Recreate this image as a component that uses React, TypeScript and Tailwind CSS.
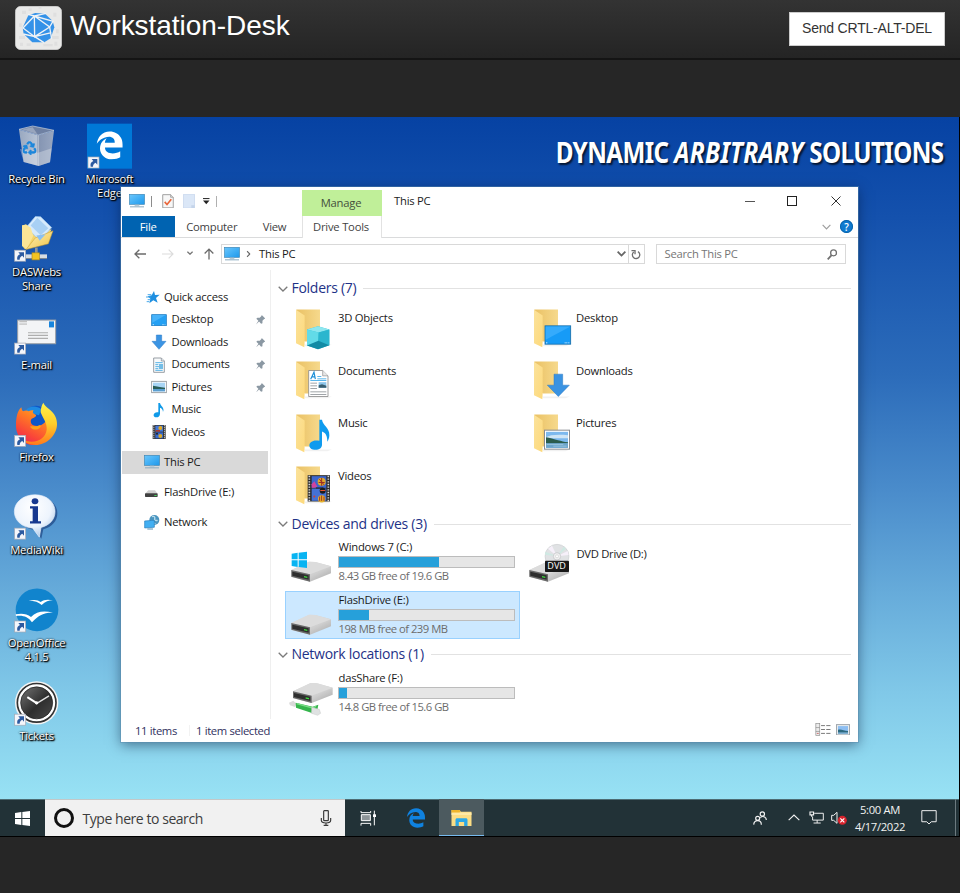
import type { ReactNode } from "react";
import { FaRecycle } from "react-icons/fa";
import { FaEdgeLegacy } from "react-icons/fa6";

/* ---------- Small shared glyphs ---------- */

function MonitorIcon({ className }: { className: string }) {
  return (
    <svg viewBox="0 0 48 42" className={className}>
      <defs>
        <linearGradient id="mon" x1="0" y1="0" x2="1" y2="1">
          <stop offset="0" stopColor="#6cc6fb" />
          <stop offset="0.5" stopColor="#43b0f5" />
          <stop offset="1" stopColor="#1f98ea" />
        </linearGradient>
      </defs>
      <rect x="1.500" y="1" width="45" height="30" fill="url(#mon)" stroke="#3f86b4" strokeWidth="2" />
      <path d="M18 32h12l2 5H16z" fill="#b9cbd6" />
      <path d="M3 38.500h42" stroke="#8aaabf" strokeWidth="3" />
    </svg>
  );
}

function Chevron({ className, width = 1.3 }: { className: string; width?: number }) {
  return (
    <svg viewBox="0 0 10 6" fill="none" stroke="currentColor" strokeWidth={width} className={className}>
      <path d="M0.700 0.700 5 5 9.300 0.700" />
    </svg>
  );
}

function PinIcon() {
  return (
    <svg viewBox="0 0 28 28" className="h-[9.5px] w-[9.5px]">
      <path d="M17 0l11 11-4 1-5 5 0 7-4 2-6-7-9 9 7-11-6-6 3-3 7 0 5-5z" fill="#8b98a3" />
    </svg>
  );
}

function ShortcutArrow({ x, y }: { x: number; y: number }) {
  return (
    <g transform={`translate(${x} ${y})`}>
      <rect x="1" y="1" width="33" height="33" fill="#f4f6fb" stroke="#a5a9b5" strokeWidth="2" />
      <path d="M9 30c-2-9 1-14 8-17l-5-6h17v17l-5-6c-6 3-8 6-8 12z" fill="#2c5aa0" />
    </g>
  );
}

/* ---------- Desktop icons ---------- */

const desktopSvg = "h-[52px] w-[73px] shrink-0";

function RecycleBinIcon() {
  return (
    <svg viewBox="0 15 219 156" className={desktopSvg}>
      <defs>
        <linearGradient id="bin" x1="0" x2="1">
          <stop offset="0" stopColor="#a3afc2" />
          <stop offset="0.5" stopColor="#c3cbd7" />
          <stop offset="0.55" stopColor="#8d9ab3" />
          <stop offset="1" stopColor="#a4afc3" />
        </linearGradient>
      </defs>
      <path d="M57 44 114 61 162 47 150 142 116 153 71 141z" fill="url(#bin)" opacity="0.930" />
      <path d="M57 43 98 33 162 46 115 60z" fill="#6f81a3" stroke="#c9d1de" strokeWidth="2" />
      <path d="M66 43 98 37 112 57z" fill="#98a5bd" />
      <path d="M115 61v91" stroke="#cfd6e1" strokeWidth="2" />
      <path d="M60 102 114 113 155 100 150 142 116 153 71 141z" fill="#dfe3ea" opacity="0.400" />
      <FaRecycle x={68} y={79} size={41} color="#1c87dc" strokeWidth={26} />
    </svg>
  );
}

function EdgeDesktopIcon() {
  return (
    <svg viewBox="219 15 219 156" className={desktopSvg}>
      <rect x="261" y="26" width="135" height="135" fill="#0078d7" />
      <FaEdgeLegacy x={286} y={48} size={86} color="#fff" />
      <ShortcutArrow x={263} y={125} />
    </svg>
  );
}

function SharedFolderIcon() {
  return (
    <svg viewBox="0 293.400 219 156" className={desktopSvg}>
      <defs>
        <linearGradient id="shf" x1="0" y1="0" x2="1" y2="1">
          <stop offset="0" stopColor="#fff3ba" />
          <stop offset="1" stopColor="#f0c245" />
        </linearGradient>
      </defs>
      <path d="M66 331 78 328 92 337 99 350 155 343 130 386 75 402 66 392z" fill="#f5d56b" />
      <path d="M79 336 106 304 122 305 155 337 120 377z" fill="#d6eafc" stroke="#9cc6ec" strokeWidth="2" />
      <path d="M92 331 112 308 145 339 122 360z" fill="#a8d0f4" />
      <path d="M66 331 78 328 92 338 100 362 80 402 66 392z" fill="#fbe596" />
      <path d="M106 368 159 347 145 386 78 403z" fill="url(#shf)" stroke="#c99a2b" strokeWidth="1.500" />
      <path d="M109 361 137 357 119 377z" fill="#8cc0f0" />
      <path d="M109 397v20" stroke="#8d949c" strokeWidth="8" />
      <path d="M77 424h64" stroke="#d8dde2" strokeWidth="13" />
      <path d="M77 430h64" stroke="#7d8790" strokeWidth="3" />
      <rect x="96" y="413" width="22" height="21" fill="#f2c322" stroke="#b28b18" strokeWidth="2" />
      <ShortcutArrow x={43} y={404} />
    </svg>
  );
}

function MailIcon() {
  return (
    <svg viewBox="0 571.800 219 156" className={desktopSvg}>
      <rect x="53" y="614" width="114" height="71" fill="#f3f4f6" stroke="#9a9fa6" strokeWidth="3" />
      <rect x="147" y="618" width="15" height="18" fill="#1784dd" />
      <path d="M58 619h23M58 626h23" stroke="#b3b3b3" strokeWidth="3" />
      <path d="M84 652h60M84 660h60M84 669h60" stroke="#aeaeae" strokeWidth="3.500" />
      <ShortcutArrow x={43} y={682} />
    </svg>
  );
}

function FirefoxIcon() {
  return (
    <svg viewBox="0 40 219 156" className={desktopSvg}>
      <defs>
        <linearGradient id="fxo" x1="0.800" y1="0" x2="0.200" y2="1">
          <stop offset="0" stopColor="#ffb22a" />
          <stop offset="0.4" stopColor="#ff7a24" />
          <stop offset="0.75" stopColor="#f9443a" />
          <stop offset="1" stopColor="#e8255f" />
        </linearGradient>
        <linearGradient id="fxt" x1="0.500" y1="0" x2="0.500" y2="1">
          <stop offset="0" stopColor="#fff24a" />
          <stop offset="0.5" stopColor="#ffcd2a" />
          <stop offset="1" stopColor="#ff7a1c" />
        </linearGradient>
      </defs>
      <circle cx="108" cy="96" r="33" fill="#0f57c8" />
      <path d="M78 77C87 63 110 62 124 74l-7 18-30-8z" fill="#1e8ae2" />
      <path d="M64 68c1 6 2 9 5 12 8-4 13-3 17 0 4-3 9-4 15-3-4 5-4 9 7 14 1 4-2 7-13 11-5 5-3 14 3 19 14 7 28 3 40-11l28 0c-4 44-38 71-67 71-32 0-51-31-51-57 0-25 4-45 16-56z" fill="url(#fxo)" />
      <path d="M122 83c0-11 3-21 8-29 3 7 9 12 17 19 17 13 25 29 24 48-2 32-31 60-64 60-20 0-30-6-36-14 38 12 66-5 69-32 2-20-11-33-18-52z" fill="url(#fxt)" />
      <path d="M90 126c8-4 14 2 25-3 8-3 10 1 5 6-8 8-22 8-30-3z" fill="#ffa11a" />
      <ShortcutArrow x={43} y={151} />
    </svg>
  );
}

function MediaWikiIcon() {
  return (
    <svg viewBox="0 318.600 219 156" className={desktopSvg}>
      <defs>
        <radialGradient id="mw" cx="0.450" cy="0.300" r="0.750">
          <stop offset="0" stopColor="#ffffff" />
          <stop offset="0.6" stopColor="#edf4fd" />
          <stop offset="1" stopColor="#a4c2e6" />
        </radialGradient>
      </defs>
      <path d="M112 335c36 0 60 23 60 50 0 24-16 41-42 48l-6 29-20-27c-30-3-50-24-50-50 0-27 24-50 58-50z" fill="#1e4582" opacity="0.700" />
      <path d="M105 330c36 0 60 23 60 50 0 24-16 41-42 48l-5 29-20-27c-34-3-55-24-55-50 0-27 26-50 62-50z" fill="url(#mw)" stroke="#e6effb" strokeWidth="2" />
      <ellipse cx="105" cy="349" rx="10" ry="9" fill="#17388f" />
      <path d="M90 364h24v45h9v7H90v-7h8v-38h-8z" fill="#17388f" />
      <ShortcutArrow x={43} y={429} />
    </svg>
  );
}

function OpenOfficeIcon() {
  return (
    <svg viewBox="0 42 219 156" className={desktopSvg}>
      <circle cx="111" cy="119.500" r="64" fill="#1184cd" />
      <path d="M86 92c16-4 28-3 36 4 9-7 21-8 37-5-13 0-23 4-34 14-9-9-21-13-39-13z" fill="#fff" />
      <path d="M47 133c18-4 33-2 46 8 17-18 40-20 66-13-26-1-43 6-63 29-12-17-27-22-48-19z" fill="#fff" />
      <ShortcutArrow x={43} y={152} />
    </svg>
  );
}

function TicketsIcon() {
  return (
    <svg viewBox="0 320.400 219 156" className={desktopSvg}>
      <defs>
        <linearGradient id="clk" x1="0" y1="0" x2="1" y2="1">
          <stop offset="0.2" stopColor="#5b5b5b" />
          <stop offset="0.55" stopColor="#2e2e2e" />
          <stop offset="1" stopColor="#4a4a4a" />
        </linearGradient>
      </defs>
      <circle cx="110" cy="398" r="65" fill="#f4f4f4" />
      <circle cx="110" cy="398" r="58" fill="#fff" stroke="#333" strokeWidth="5" />
      <circle cx="110" cy="398" r="48" fill="url(#clk)" stroke="#1b1b1b" strokeWidth="2" />
      <path d="M82 381 110 399" stroke="#fff" strokeWidth="6" />
      <path d="M108 401 147 377" stroke="#e3e3e3" strokeWidth="4" />
      <circle cx="110" cy="398" r="5" fill="#fff" />
      <ShortcutArrow x={43} y={431} />
    </svg>
  );
}

function DesktopItem({ icon, lines }: { icon: ReactNode; lines: string[] }) {
  return (
    <div className="flex h-[92.8px] w-[73px] flex-col items-center">
      {icon}
      {lines.map((line) => (
        <span
          key={line}
          className="text-[11.25px] leading-[14px] tracking-[-0.2px] whitespace-nowrap text-white [text-shadow:1px_1px_1px_#000,0_0_2px_#000,1px_1px_2px_#000]"
        >
          {line}
        </span>
      ))}
    </div>
  );
}

/* ---------- Sidebar ---------- */

function SideRow({
  icon,
  label,
  nested,
  pinned,
  selected,
}: {
  icon: ReactNode;
  label: string;
  nested?: boolean;
  pinned?: boolean;
  selected?: boolean;
}) {
  return (
    <div
      className={`flex h-[22.5px] w-[146px] items-center ${nested ? "pl-[28.5px]" : "pl-[21px]"} ${
        selected ? "bg-[#d9d9d9]" : ""
      }`}
    >
      <span className="flex w-[17px] shrink-0 justify-center">{icon}</span>
      <span className="ml-[4px] flex-1 whitespace-nowrap">{label}</span>
      {pinned && (
        <span className="mr-[3px]">
          <PinIcon />
        </span>
      )}
    </div>
  );
}

const smallIcon = "h-[16px] w-[16px]";

const StarSmall = (
  <svg viewBox="0 0 48 48" className={smallIcon}>
    <path d="M30 6l3 12 14-1-11 10 5 14-13-7-12 9 3-14-8-7 12-3z" fill="#1f8fe0" />
    <path d="M11 17h11M6 24h14M11 32h8M8 38h8" stroke="#4aa9ea" strokeWidth="3" />
  </svg>
);
const DesktopSmall = (
  <svg viewBox="0 0 48 48" className={smallIcon}>
    <rect x="2" y="8" width="44" height="33" fill="#25a0f3" stroke="#1173bd" strokeWidth="2" />
    <path d="M4 9h40L4 32z" fill="#48b3fa" />
    <path d="M5 38h4M33 38h2M37 38h2M41 38h2" stroke="#fff" strokeWidth="2" />
  </svg>
);
const DownSmall = (
  <svg viewBox="0 0 48 48" className={smallIcon}>
    <path d="M16 3h16v19h13L24 46 3 22h13z" fill="#3b94e3" stroke="#2a7ac6" strokeWidth="1.500" />
  </svg>
);
const DocSmall = (
  <svg viewBox="0 0 48 48" className={smallIcon}>
    <path d="M8 3h23l9 9v34H8z" fill="#f8fafb" stroke="#858d94" strokeWidth="2.500" />
    <path d="M31 3v9h9" fill="#dde4ea" stroke="#858d94" strokeWidth="2" />
    <path d="M13 17h22M13 23h9M13 29h22M13 35h9M13 40h22" stroke="#57b1e4" strokeWidth="3" />
    <rect x="24" y="21" width="12" height="15" fill="#74bde6" />
  </svg>
);
const PictureSmall = (
  <svg viewBox="0 0 48 48" className={smallIcon}>
    <rect x="2" y="7" width="44" height="34" fill="#fff" stroke="#8d9499" strokeWidth="2.500" />
    <rect x="6" y="11" width="36" height="26" fill="#a8d5f5" />
    <path d="M6 20c12 1 20 5 36 6v5H6z" fill="#295e58" />
    <path d="M6 30h36v7H6z" fill="#5a9ed0" />
  </svg>
);
const MusicSmall = (
  <svg viewBox="0 0 48 48" className={smallIcon}>
    <path d="M22 3h5c2 10 15 14 9 27 0-8-4-11-9-13v18c0 7-5 11-11 11s-9-4-8-8c1-6 8-9 14-7z" fill="#109ae8" />
  </svg>
);
const VideoSmall = (
  <svg viewBox="0 0 48 48" className={smallIcon}>
    <rect x="5" y="3" width="39" height="42" fill="#303030" />
    <path d="M8.500 4v40M40.500 4v40" stroke="#d8d8d8" strokeWidth="3.500" strokeDasharray="3 3" />
    <rect x="13" y="5" width="23" height="18" fill="#4478d8" />
    <rect x="13" y="25" width="23" height="18" fill="#3568ce" />
    <circle cx="28" cy="12" r="6" fill="#e2aa24" />
    <path d="M14 18h13v5H14z" fill="#a53b30" />
    <circle cx="28" cy="36" r="6" fill="#d9a92b" />
    <circle cx="18" cy="29" r="3" fill="#222" />
  </svg>
);
const FlashSmall = (
  <svg viewBox="0 0 48 48" className={smallIcon}>
    <path d="M13 19h20l8 10H3z" fill="#cfcfcf" />
    <rect x="3" y="28" width="38" height="11" rx="2" fill="#414141" />
    <rect x="31" y="33" width="7" height="3" fill="#44d35e" />
  </svg>
);
const NetworkSmall = (
  <svg viewBox="0 0 48 48" className={smallIcon}>
    <circle cx="31" cy="18" r="15" fill="#4a94bf" />
    <path d="M24 8c7-3 10 2 8 7s5 5 9 4M22 20l12 10" stroke="#b7dcec" strokeWidth="4" fill="none" />
    <path d="M2 19h29v21H2z" fill="#42aff2" stroke="#287fbd" strokeWidth="2" transform="skewY(-4) translate(0 2)" />
    <path d="M10 45h17" stroke="#5a91b3" strokeWidth="3" />
  </svg>
);

/* ---------- Content tiles ---------- */

const tileSvg = "h-[48.5px] w-[50px] shrink-0";

function FolderIcon({ children }: { children: ReactNode }) {
  return (
    <svg viewBox="45 97.500 150 145.500" className={tileSvg}>
      <defs>
        <linearGradient id="fback" x1="0" x2="1">
          <stop offset="0" stopColor="#eac164" />
          <stop offset="1" stopColor="#f6d98c" />
        </linearGradient>
        <linearGradient id="ffront" x1="0" x2="1" y2="1">
          <stop offset="0" stopColor="#fbe29b" />
          <stop offset="1" stopColor="#fdd97b" />
        </linearGradient>
      </defs>
      <path d="M102 222h84l-14 5h-66z" fill="#f1f1f1" />
      <path d="M79 117h71v96h-45L79 200z" fill="url(#fback)" />
      <path d="M78 118 104 135v79l-1 16-25-12z" fill="url(#ffront)" />
      {children}
    </svg>
  );
}

/* Overlays drawn over each folder's lower-right corner. */
const cubeOverlay = (
  <>
    <path d="M111 177 144 167 178 177 178 224 144 236 111 225z" fill="#33bfd5" />
    <path d="M111 177 144 167 178 177 146 186z" fill="#8ee7ef" />
    <path d="M111 177 146 186 144 222 111 225z" fill="#62dbe8" />
    <path d="M178 177 146 186 145 212 178 224z" fill="#2bb6ce" />
    <path d="M111 225 145 211 178 224 144 236z" fill="#128ba5" />
  </>
);
const desktopOverlay = (
  <>
    <rect x="111" y="166" width="77" height="55" fill="#169bf7" stroke="#176ea8" strokeWidth="2.500" />
    <path d="M113 168h74l-74 40z" fill="#35abfc" />
    <path d="M114 217h4M170 217h3M175 217h3M181 217h3" stroke="#fff" strokeWidth="2.500" />
  </>
);
const documentOverlay = (
  <>
    <path d="M116 144h42l16 16v62h-58z" fill="#fff" stroke="#8c8c8c" strokeWidth="2.500" />
    <path d="M158 144v16h16" fill="#e7e7e7" stroke="#8c8c8c" strokeWidth="2" />
    <path d="M122 170 132 149 136 170M126 163h9" stroke="#1d8fd8" strokeWidth="3.500" fill="none" />
    <path d="M142 162h12M142 169h27M121 174h48" stroke="#37a7e8" strokeWidth="2.500" />
    <path d="M121 182h20M121 190h20M121 198h20M121 208h48M121 216h48" stroke="#8d9296" strokeWidth="2.500" />
    <rect x="146" y="179" width="23" height="17" fill="#8cc5ea" />
    <path d="M146 188l10-3 13 5v6h-23z" fill="#395d6e" />
  </>
);
const downloadOverlay = (
  <path d="M138 155h26v33h20l-33 34-33-34h20z" fill="#3a93e2" stroke="#2a79c2" strokeWidth="1.500" />
);
const musicOverlay = (
  <path d="M148 133h8c2 17 23 24 22 46 0 8-3 14-6 20 0-14-3-27-16-31v40c0 9-8 15-20 15-10 0-18-5-18-13s8-15 20-15c4 0 7 0 10 1z" fill="#0f9bee" />
);
const pictureOverlay = (
  <>
    <rect x="109.500" y="164" width="75" height="57" fill="#fff" stroke="#8a8d91" strokeWidth="3" />
    <rect x="114" y="169" width="66" height="48" fill="#7db9ee" />
    <path d="M114 185c10-7 35-9 66-6v9h-66z" fill="#cfe5f5" />
    <path d="M114 185c10 0 25 7 36 9s18 5 30 6v4h-66z" fill="#2b5c4c" />
    <path d="M114 203h66v14h-66z" fill="#6ea6cb" />
    <path d="M116 207h50M136 212h40" stroke="#a9cee6" strokeWidth="2" />
  </>
);
const videoOverlay = (
  <>
    <rect x="113" y="143" width="67" height="79" fill="#2b2b2b" />
    <path d="M118 145v76M175 145v76" stroke="#d9d9d9" strokeWidth="5" strokeDasharray="4 4" />
    <rect x="125" y="146" width="44" height="35" fill="#3d66cc" />
    <rect x="125" y="183" width="44" height="37" fill="#4471d6" />
    <circle cx="155" cy="163" r="12" fill="#e0a92b" />
    <path d="M148 155l14 17M155 151v24M146 165h18" stroke="#9b2e25" strokeWidth="3" />
    <path d="M125 170l8-9 9 17-9 3h-8z" fill="#d1439e" />
    <path d="M138 180h22v3h-22z" fill="#252525" />
    <circle cx="158" cy="190" r="9" fill="#1c1c1c" />
    <path d="M151 189h15" stroke="#e7512e" strokeWidth="3" />
    <circle cx="155" cy="214" r="11" fill="#e6b329" />
    <path d="M155 204v16M149 207v13M162 207v13" stroke="#a33326" strokeWidth="3" />
    <circle cx="133" cy="207" r="3" fill="#d4432d" />
  </>
);

function DriveBody() {
  return (
    <>
      <defs>
        <linearGradient id="drv" x1="0" x2="1" y2="1">
          <stop offset="0" stopColor="#e2e2e2" />
          <stop offset="0.6" stopColor="#cfcfcf" />
          <stop offset="1" stopColor="#a5a5a5" />
        </linearGradient>
      </defs>
      <path d="M64 195 117 170 136 171 183 184V205L120 230 64 216z" fill="url(#drv)" />
      <path d="M64 195 117 170 136 171 183 184 120 208z" fill="#dcdcdc" />
      <path d="M64 195 120 208v22L64 215z" fill="#6a6a6a" />
      <path d="M67 200 116 211v13L67 212z" fill="#2e2e2e" />
      <path d="M102 213l10 2v4l-10-2z" fill="#3ddc3d" />
    </>
  );
}

function DriveIcon({ kind }: { kind: "windows" | "dvd" | "plain" | "network" }) {
  return (
    <svg viewBox="45 99 150 145.500" className={tileSvg}>
      {kind !== "network" && <DriveBody />}
      {kind === "windows" && (
        <path d="M65 146 83 143v20H65zM86 143l25-3v23H86zM65 166h18v20l-18-3zM86 166h25v23l-25-3z" fill="#08b4f2" />
      )}
      {kind === "dvd" && (
        <>
          <circle cx="147" cy="154" r="36" fill="#e0e2e4" stroke="#c4c6c9" strokeWidth="1.500" />
          <path d="M147 154 120 131l12-9zM147 154l32-16 3 12z" fill="#f6f0fa" />
          <path d="M147 154l-36-5 1-9zM147 154l20-29 7 6z" fill="#cfe9e3" />
          <circle cx="147" cy="154" r="11" fill="#f1f1f1" stroke="#bfbfc3" strokeWidth="2" />
          <circle cx="147" cy="154" r="4.500" fill="#fff" stroke="#aaa" />
          <rect x="111" y="167" width="72" height="34" rx="2" fill="#181818" />
          <text
            x="146"
            y="193"
            textAnchor="middle"
            textLength="56"
            lengthAdjust="spacingAndGlyphs"
            fill="#fff"
            className="[font-family:'Open_Sans',sans-serif] text-[26px] tracking-normal"
          >
            DVD
          </text>
        </>
      )}
      {kind === "network" && (
        <>
          <path d="M57 200 70 194 80 204 75 213 60 208z" fill="#dadada" />
          <path d="M77 200 128 212 145 206 142 222 128 232 78 215z" fill="#35b54c" />
          <path d="M80 203 128 216 138 211" stroke="#79dd86" strokeWidth="4" fill="none" />
          <path d="M125 214 148 220 152 232 143 238 124 232z" fill="#dfe2e2" stroke="#bababa" />
          <g transform="translate(5 -29)">
            <DriveBody />
          </g>
        </>
      )}
    </svg>
  );
}

function FolderTile({ label, children }: { label: string; children: ReactNode }) {
  return (
    <div className="flex h-[48.5px] w-[238px]">
      <FolderIcon>{children}</FolderIcon>
      <span className="mt-[7.5px] ml-[3px] leading-[16px] whitespace-nowrap">{label}</span>
    </div>
  );
}

function DriveTile({
  kind,
  label,
  free,
  used,
  selected,
}: {
  kind: "windows" | "plain" | "network";
  label: string;
  free: string;
  used: number;
  selected?: boolean;
}) {
  return (
    <div
      className={`flex h-[48.5px] w-[234.5px] ${
        selected ? "bg-[#cce8ff] shadow-[inset_0_0_0_1px_#99d1ff]" : ""
      }`}
    >
      <DriveIcon kind={kind} />
      <div className="ml-[2.5px] flex w-[177.5px] flex-col">
        <span className="h-[18px] pl-px leading-[18px] whitespace-nowrap">{label}</span>
        <div className="h-[12px] border border-[#bcbcbc] bg-[#e6e6e6]">
          <div className="h-full bg-[#26a0da]" style={{ width: `${used}%` }} />
        </div>
        <span className="pl-px leading-[16px] tracking-[-0.5px] whitespace-nowrap text-[#6d6d6d]">{free}</span>
      </div>
    </div>
  );
}

function SectionHeader({ label }: { label: string }) {
  return (
    <div className="flex h-[25.5px] items-center pr-[7px] pb-[2px] pl-[6.5px] text-[#1e3287]">
      <Chevron className="h-[6px] w-[10px] text-[#7b7b7b]" />
      <span className="ml-[4px] pb-[2px] text-[14px] tracking-[-0.27px] whitespace-nowrap">{label}</span>
      <div className="ml-[7px] h-px flex-1 bg-[#e2e2e2]" />
    </div>
  );
}

/* ---------- Explorer window ---------- */

function TitleBar() {
  return (
    <div className="flex h-[29px] items-start">
      <div className="flex h-[28px] w-[181px] items-center pl-[8px]">
        <MonitorIcon className="h-[14px] w-[16px]" />
        <div className="ml-[6px] h-[11px] w-px bg-[#8c8c8c]" />
        <svg viewBox="0 0 36 44" className="ml-[10px] h-[14.500px] w-[12px]">
          <path d="M2 2h24l8 8v32H2z" fill="#f7f7f7" stroke="#8d8d8d" strokeWidth="2.500" />
          <path d="M26 2v8h8" fill="#ddd" stroke="#8d8d8d" strokeWidth="2" />
          <path d="M8 24l7 8 13-16" fill="none" stroke="#e9663a" strokeWidth="5" />
        </svg>
        <svg viewBox="0 0 36 44" className="ml-[9px] h-[14.500px] w-[12px]">
          <path d="M1 1h34v42H1z" fill="#dbe7f7" stroke="#bfd0ea" strokeWidth="2" />
          <path d="M25 34h10v9H25z" fill="#c4d4ea" />
        </svg>
        <svg viewBox="0 0 18 18" className="mt-px ml-[8px] h-[6.5px] w-[6.5px]">
          <path d="M0 1.500h18" stroke="#333" strokeWidth="3" />
          <path d="M0 7h18l-9 10z" fill="#222" />
        </svg>
        <div className="ml-[6.500px] h-[11px] w-px bg-[#b0b0b0]" />
      </div>
      <div className="mt-[3px] flex h-[26px] w-[80px] items-center justify-center bg-[#c0ef99] pr-[2px] text-[#45503d]">
        Manage
      </div>
      <span className="ml-[12px] flex-1 leading-[28px] text-[#222]">This PC</span>
      <div className="flex h-[28px] w-[113px] items-center text-[#333]">
        <div className="h-px w-[10px] bg-[#555]" />
        <div className="ml-[32px] h-[10px] w-[10px] border border-[#222]" />
        <svg viewBox="0 0 10 10" stroke="currentColor" strokeWidth="1" className="ml-[33.500px] h-[10px] w-[10px]">
          <path d="M0.500 0.500l9 9M9.500 0.500l-9 9" />
        </svg>
      </div>
    </div>
  );
}

function RibbonTabs() {
  return (
    <div className="flex h-[22px] items-stretch border-b border-[#dadbdc] leading-[21.5px] text-[#3f3f3f]">
      <div className="ml-px w-[52.500px] bg-[#0063b1] text-center text-white">File</div>
      <span className="w-[74.500px] text-center">Computer</span>
      <span className="w-[53px] pr-[2px] text-center">View</span>
      <div className="-mb-px w-[80px] border-x border-[#e2e2e2] bg-white pr-[2px] text-center">Drive Tools</div>
      <div className="flex flex-1 items-center justify-end pr-[5px]">
        <Chevron className="h-[6px] w-[9px] text-[#9d9d9d]" />
        <div className="ml-[9px] flex h-[13px] w-[13px] items-center justify-center rounded-full bg-[#0f7ad0] text-[10px] leading-none font-semibold text-white shadow-[inset_0_0_0_1px_#0763ab]">
          ?
        </div>
      </div>
    </div>
  );
}

function AddressRow() {
  return (
    <div className="flex h-[32px] items-center pl-[13px]">
      <svg viewBox="0 0 36 30" fill="none" stroke="#6b6b6b" strokeWidth="4" className="h-[10px] w-[12px]">
        <path d="M36 15H3M16 2 3 15l13 13" />
      </svg>
      <svg viewBox="0 0 36 30" fill="none" stroke="#dcdcdc" strokeWidth="3.500" className="ml-[16px] h-[10px] w-[12px]">
        <path d="M0 15h33M20 2l13 13-13 13" />
      </svg>
      <Chevron className="mb-[2px] ml-[12.500px] h-[4px] w-[6px] text-[#777]" width={2.2} />
      <svg viewBox="0 0 30 34" fill="none" stroke="#6b6b6b" strokeWidth="4" className="ml-[11px] h-[11.500px] w-[10px]">
        <path d="M15 34V3M2 16 15 3l13 13" />
      </svg>
      <div className="ml-[7px] flex h-[20px] w-[424px] items-center border border-[#d9d9d9] pl-[2px]">
        <MonitorIcon className="h-[14px] w-[16px]" />
        <Chevron className="ml-[5px] h-[4px] w-[7px] -rotate-90 text-[#666]" width={1.8} />
        <span className="ml-[7.500px] flex-1">This PC</span>
        <Chevron className="h-[5.500px] w-[9px] text-[#666]" width={2} />
        <div className="ml-[2px] flex h-full w-[16px] items-center justify-center border-l border-[#d9d9d9]">
          <svg viewBox="0 0 30 34" fill="none" stroke="#6e6e6e" strokeWidth="4" className="h-[11px] w-[10px]">
            <path d="M21 8a11.500 11.500 0 1 1-13 1" />
            <path d="M1 5h11v11" />
          </svg>
        </div>
      </div>
      <div className="ml-[11px] flex h-[20px] w-[190px] items-center border border-[#d9d9d9] pr-[7px] pl-[8px] tracking-[-0.25px] text-[#767676]">
        <span className="flex-1">Search This PC</span>
        <svg viewBox="0 0 32 34" fill="none" stroke="#707070" strokeWidth="4" className="h-[11px] w-[10.500px]">
          <circle cx="20" cy="12" r="9" />
          <path d="M14 19 2 32" strokeWidth="5.500" />
        </svg>
      </div>
    </div>
  );
}

function Sidebar() {
  return (
    <div className="flex w-[150px] flex-col border-r border-[#efefef] pt-[16px] pl-px">
      <SideRow icon={StarSmall} label="Quick access" />
      <SideRow icon={DesktopSmall} label="Desktop" nested pinned />
      <SideRow icon={DownSmall} label="Downloads" nested pinned />
      <SideRow icon={DocSmall} label="Documents" nested pinned />
      <SideRow icon={PictureSmall} label="Pictures" nested pinned />
      <SideRow icon={MusicSmall} label="Music" nested />
      <SideRow icon={VideoSmall} label="Videos" nested />
      <div className="mt-[7.500px] flex flex-col gap-[7.500px]">
        <SideRow icon={<MonitorIcon className="h-[14px] w-[16px]" />} label="This PC" selected />
        <SideRow icon={FlashSmall} label="FlashDrive (E:)" />
        <SideRow icon={NetworkSmall} label="Network" />
      </div>
    </div>
  );
}

function Content() {
  return (
    <div className="flex-1 pt-[7px]">
      <SectionHeader label="Folders (7)" />
      <div className="grid grid-cols-[238px_238px] gap-y-[4px] pb-[4px] pl-[14px]">
        <FolderTile label="3D Objects">{cubeOverlay}</FolderTile>
        <FolderTile label="Desktop">{desktopOverlay}</FolderTile>
        <FolderTile label="Documents">{documentOverlay}</FolderTile>
        <FolderTile label="Downloads">{downloadOverlay}</FolderTile>
        <FolderTile label="Music">{musicOverlay}</FolderTile>
        <FolderTile label="Pictures">{pictureOverlay}</FolderTile>
        <FolderTile label="Videos">{videoOverlay}</FolderTile>
      </div>
      <SectionHeader label="Devices and drives (3)" />
      <div className="grid grid-cols-[238px_238px] gap-y-[4px] pb-[4px] pl-[14px]">
        <DriveTile kind="windows" label="Windows 7 (C:)" free="8.43 GB free of 19.6 GB" used={57} />
        <div className="flex">
          <DriveIcon kind="dvd" />
          <span className="mt-[7.5px] ml-[3.5px] leading-[16px] tracking-[-0.3px] whitespace-nowrap">DVD Drive (D:)</span>
        </div>
        <DriveTile kind="plain" label="FlashDrive (E:)" free="198 MB free of 239 MB" used={17.500} selected />
      </div>
      <SectionHeader label="Network locations (1)" />
      <div className="pl-[14px]">
        <DriveTile kind="network" label="dasShare (F:)" free="14.8 GB free of 15.6 GB" used={5} />
      </div>
    </div>
  );
}

function StatusBar() {
  return (
    <div className="flex h-[23px] items-center pr-[8.5px] pl-[14px] tracking-[-0.35px] text-[#303060]">
      <span className="w-[54px] pt-px">11 items</span>
      <div className="h-[11px] w-px bg-[#f2f2f2]" />
      <span className="ml-[6px] flex-1 pt-px">1 item selected</span>
      <svg viewBox="0 0 48 40" className="mb-[2px] h-[13px] w-[16px]">
        <rect x="2" y="2" width="12" height="36" fill="#ececec" stroke="#8a8a8a" strokeWidth="2" />
        <path d="M2 14h12M2 26h12" stroke="#8a8a8a" strokeWidth="2" />
        <path d="M5 32h6" stroke="#c96e6e" strokeWidth="3" />
        <path d="M18 8h12M34 8h13M18 20h12M34 20h13M18 32h12M34 32h13" stroke="#777" strokeWidth="3" />
      </svg>
      <svg viewBox="0 0 42 34" className="mb-[2px] ml-[5px] h-[11.500px] w-[14px]">
        <rect x="1.500" y="1.500" width="39" height="31" fill="#e8ecef" stroke="#a1a8ae" strokeWidth="3" />
        <rect x="6" y="6" width="30" height="22" fill="#8dbef2" />
        <path d="M6 17c8-3 18 2 30 4v7H6z" fill="#2d6a80" />
        <path d="M6 25h30v4H6z" fill="#85b7dd" />
      </svg>
    </div>
  );
}

function ExplorerWindow() {
  return (
    <div className="absolute top-[70px] left-[121px] flex h-[555px] w-[737px] flex-col bg-white text-[11.25px] tracking-[-0.23px] text-[#1a1a1a] shadow-[0_0_0_1px_rgba(90,140,175,0.45),0_3px_12px_rgba(0,20,50,0.5)]">
      <TitleBar />
      <RibbonTabs />
      <AddressRow />
      <div className="flex min-h-0 flex-1">
        <Sidebar />
        <Content />
      </div>
      <StatusBar />
    </div>
  );
}

/* ---------- Taskbar ---------- */

function Taskbar() {
  return (
    <div className="relative flex h-[37px] items-stretch bg-[#223237] shadow-[inset_0_1px_0_#4d6c73]">
      <div className="flex w-[45px] items-center justify-center pt-px">
        <svg viewBox="0 0 45 45" className="h-[15px] w-[15px]" fill="#fff">
          <path d="M0 6l19-3v18H0zM22 3l23-3v21H22zM0 24h19v18L0 39zM22 24h23v21l-23-3z" />
        </svg>
      </div>
      <div className="flex w-[300px] items-center border-t border-[#c4c8c8] bg-[#f1f1f1] pr-[13px] pl-[9px]">
        <div className="h-[20px] w-[20px] rounded-full border-[3px] border-[#111]" />
        <span className="ml-[8.5px] flex-1 pt-px text-[14px] tracking-[-0.45px] text-[#3d3d3d]">
          Type here to search
        </span>
        <svg viewBox="0 0 36 48" fill="none" stroke="#3a3a3a" strokeWidth="3.500" className="h-[16px] w-[12px]">
          <rect x="11" y="2" width="14" height="30" rx="2" />
          <path d="M4 24v7c0 6 5 8 14 8s14-2 14-8v-7M18 39v8M11 46h14" />
        </svg>
      </div>
      <div className="flex w-[45px] items-center justify-center">
        <svg viewBox="0 0 48 48" fill="none" stroke="#fff" strokeWidth="3" className="h-[16px] w-[16px]">
          <path d="M3 3v5h29V3M3 47v-7h29v7M43 2v44" />
          <path d="M4 14h27v18H4z" fill="#8d9598" />
          <path d="M39 17h9" strokeWidth="8" />
        </svg>
      </div>
      <div className="flex w-[49px] items-center justify-center pt-px pl-[2px] text-[#0f82e0]">
        <FaEdgeLegacy size={20} />
      </div>
      <div className="flex w-[45px] items-center justify-center border-b border-[#76b9ed] bg-[#4c5a5f]">
        <svg viewBox="0 0 62 54" className="mt-px h-[18px] w-[21px]">
          <path d="M1 3h24l4 5h32v43H1z" fill="#fcdd84" />
          <path d="M1 3h24l3 4-3 4H1z" fill="#f0b52c" />
          <path d="M1 11h60v7H1z" fill="#ffe9a6" />
          <path d="M13 51V33c0-3 2-5 5-5h26c3 0 5 2 5 5v18H39V39H23v12z" fill="#2da8e6" />
        </svg>
      </div>
      <div className="flex flex-1 items-center justify-end pr-[3px] text-[#f2f2f2]">
        <svg viewBox="0 0 42 42" fill="none" stroke="currentColor" strokeWidth="3.500" className="h-[14px] w-[14px]">
          <circle cx="28" cy="9" r="6.500" />
          <circle cx="14" cy="22" r="6" />
          <path d="M2 41c1-9 6-12 12-12s11 4 11 12M22 20c3-3 9-4 13-2 4 2 5 5 5 9" />
        </svg>
        <svg viewBox="0 0 36 20" fill="none" stroke="currentColor" strokeWidth="3.500" className="ml-[21px] h-[7px] w-[12px]">
          <path d="M2 18 18 3l16 15" />
        </svg>
        <svg viewBox="0 0 46 40" fill="none" stroke="currentColor" strokeWidth="3" className="ml-[9px] h-[13px] w-[15px]">
          <path d="M16 7h28v21H11V17M25 28v9M14 37h22" />
          <path d="M3 3h11v9H3zM8 12v6" strokeWidth="3.500" />
        </svg>
        <svg viewBox="0 0 48 42" className="ml-[7px] h-[14px] w-[16px]">
          <path d="M2 13h6L18 4v33L8 28H2z" fill="none" stroke="#f2f2f2" strokeWidth="3" />
          <circle cx="34" cy="28" r="13.500" fill="#d9222c" />
          <path d="M28 22l12 12M40 22L28 34" stroke="#fff" strokeWidth="3.500" />
        </svg>
        <div className="ml-[2px] flex w-[62px] flex-col items-center text-[11.25px] leading-[17px] tracking-[-0.35px] whitespace-nowrap">
          <span>5:00 AM</span>
          <span>4/17/2022</span>
        </div>
        <svg viewBox="0 0 48 46" fill="none" stroke="currentColor" strokeWidth="3" className="ml-[10px] h-[15px] w-[16px]">
          <path d="M2 2h44v34H31l-7 7-7-7H2z" />
        </svg>
        <div className="ml-[18px] h-[37px] w-px bg-[#6c7a7f]" />
      </div>
    </div>
  );
}

/* ---------- Page ---------- */

function LogoIcon() {
  return (
    <svg viewBox="45 18 141 132" className="h-[44px] w-[47px]">
      <rect x="46" y="19" width="139" height="130" rx="16" fill="#e9e9e8" stroke="#d4d4d4" strokeWidth="2" />
      <path
        d="M66 32h12v10H66zM86 25h9v8h-9zM116 20h8v6h-8zM160 38h9v12h-9zM57 70h8v11h-8zM168 88h8v12h-8zM57 108h18v9H57zM156 108h20v9h-20zM60 128h9v10h-9zM80 130h12v8H80zM130 132h28v7h-28zM163 125h9v12h-9z"
        fill="#dfdfdf"
      />
      <path
        d="M68 83 85 46 106 39 135 41 158 63 163 82 152 115 133 127 97 127 71 102z"
        fill="#3492e8"
      />
      <path
        d="M103 48 149 81 104 110zM103 48 84 43M103 48 69 84 104 110M103 48 138 40M103 48 160 64M149 81l11-19M149 81l6 36M104 110l50-12M104 110l28 18M104 110l-34-8"
        fill="none"
        stroke="#f0f3f6"
        strokeWidth="4"
      />
    </svg>
  );
}

export default function App() {
  return (
    <div className="h-[893px] w-[960px] overflow-hidden bg-[#262626] [font-family:'Open_Sans','Noto_Sans',sans-serif]">
      <header className="flex h-[60px] items-start border-b-2 border-[#141414] bg-linear-to-b from-[#333333] to-[#242424] pr-[15px] pl-[15px] [font-family:'Liberation_Sans',Arial,sans-serif]">
        <div className="pt-[6px]">
          <LogoIcon />
        </div>
        <h1 className="ml-[8px] flex-1 pt-[9px] text-[28px] leading-[34px] tracking-[-0.05px] text-white">
          Workstation-Desk
        </h1>
        <button className="mt-[12px] h-[34px] w-[156px] border border-[#cccccc] bg-white pb-[2px] text-[14px] tracking-[-0.2px] text-[#333]">
          Send CRTL-ALT-DEL
        </button>
      </header>

      <main className="relative mt-[57px] flex h-[720px] flex-col border-r border-b border-black bg-[linear-gradient(to_bottom,#0642a3_0%,#1451ad_14%,#2c6cba_36%,#4a8ccb_52%,#66abda_66%,#80c8e8_80%,#98e2f4_95%)]">
        <div className="flex flex-1 items-start pt-[3px]">
          <div className="flex flex-col">
            <DesktopItem icon={<RecycleBinIcon />} lines={["Recycle Bin"]} />
            <DesktopItem icon={<SharedFolderIcon />} lines={["DASWebs", "Share"]} />
            <DesktopItem icon={<MailIcon />} lines={["E-mail"]} />
            <DesktopItem icon={<FirefoxIcon />} lines={["Firefox"]} />
            <DesktopItem icon={<MediaWikiIcon />} lines={["MediaWiki"]} />
            <DesktopItem icon={<OpenOfficeIcon />} lines={["OpenOffice", "4.1.5"]} />
            <DesktopItem icon={<TicketsIcon />} lines={["Tickets"]} />
          </div>
          <DesktopItem icon={<EdgeDesktopIcon />} lines={["Microsoft", "Edge"]} />
          <div className="flex flex-1 flex-col items-end pt-[12px] pr-[15.500px] [font-family:'Noto_Sans',sans-serif] whitespace-nowrap text-white">
            <span className="origin-right scale-x-[0.835] text-[29px] leading-[40px] font-bold tracking-[-0.7px] [text-shadow:2px_2px_2px_rgba(0,0,0,0.7)]">
              DYNAMIC <em className="tracking-[0.4px]">ARBITRARY</em> SOLUTIONS
            </span>
            <span className="mt-[11px] mr-[108px] text-[14px] leading-[18px] tracking-[1px] text-[#8fa9d6]/60">
              TECHNICAL SERVICES
            </span>
          </div>
        </div>
        <ExplorerWindow />
        <Taskbar />
      </main>
    </div>
  );
}
